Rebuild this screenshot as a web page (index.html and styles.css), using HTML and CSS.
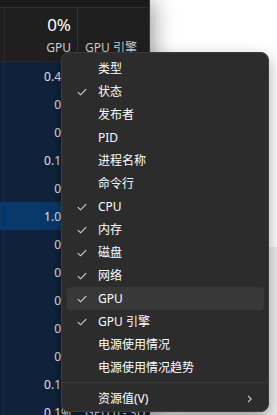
FILE: index.html
```html
<!DOCTYPE html>
<html lang="zh-CN">
<head>
<meta charset="utf-8">
<link rel="stylesheet" href="styles.css">
</head>
<body>
<div class="screen">
  <div class="app">
    <div class="topbar"></div>
    <div class="header">
      <div class="hcell edge"></div>
      <div class="hcell gpu">
        <div class="pct">0%</div>
        <div class="hname">GPU</div>
      </div>
      <div class="hcell eng">
        <div class="pct"></div>
        <div class="hname">GPU 引擎</div>
      </div>
    </div>
    <div class="rows">
      <div class="row"><span class="edge"></span><span class="val">0.4%</span><span class="eng"></span></div>
      <div class="row"><span class="edge"></span><span class="val">0%</span><span class="eng"></span></div>
      <div class="row"><span class="edge"></span><span class="val">0%</span><span class="eng"></span></div>
      <div class="row"><span class="edge"></span><span class="val">0.1%</span><span class="eng"></span></div>
      <div class="row"><span class="edge"></span><span class="val">0%</span><span class="eng"></span></div>
      <div class="row hot"><span class="edge"></span><span class="val">1.0%</span><span class="eng"></span></div>
      <div class="row"><span class="edge"></span><span class="val">0%</span><span class="eng"></span></div>
      <div class="row"><span class="edge"></span><span class="val">0%</span><span class="eng"></span></div>
      <div class="row"><span class="edge"></span><span class="val">0%</span><span class="eng"></span></div>
      <div class="row"><span class="edge"></span><span class="val">0%</span><span class="eng"></span></div>
      <div class="row"><span class="edge"></span><span class="val">0%</span><span class="eng"></span></div>
      <div class="row"><span class="edge"></span><span class="val">0.1%</span><span class="eng"></span></div>
      <div class="row"><span class="edge"></span><span class="val">0.1%</span><span class="eng">GPU 0 - 3D</span></div>
    </div>
  </div>
  <div class="desktop">
    <div class="white"></div>
    <div class="grey"></div>
  </div>

  <div class="menu">
    <div class="item"><span class="check"></span><span class="label">类型</span></div>
    <div class="item"><span class="check"><svg viewBox="0 0 10 8" width="10" height="8"><path d="M0.8 4.2 L3.6 6.8 L9.2 1.2" /></svg></span><span class="label">状态</span></div>
    <div class="item"><span class="check"></span><span class="label">发布者</span></div>
    <div class="item"><span class="check"></span><span class="label">PID</span></div>
    <div class="item"><span class="check"></span><span class="label">进程名称</span></div>
    <div class="item"><span class="check"></span><span class="label">命令行</span></div>
    <div class="item"><span class="check"><svg viewBox="0 0 10 8" width="10" height="8"><path d="M0.8 4.2 L3.6 6.8 L9.2 1.2" /></svg></span><span class="label">CPU</span></div>
    <div class="item"><span class="check"><svg viewBox="0 0 10 8" width="10" height="8"><path d="M0.8 4.2 L3.6 6.8 L9.2 1.2" /></svg></span><span class="label">内存</span></div>
    <div class="item"><span class="check"><svg viewBox="0 0 10 8" width="10" height="8"><path d="M0.8 4.2 L3.6 6.8 L9.2 1.2" /></svg></span><span class="label">磁盘</span></div>
    <div class="item"><span class="check"><svg viewBox="0 0 10 8" width="10" height="8"><path d="M0.8 4.2 L3.6 6.8 L9.2 1.2" /></svg></span><span class="label">网络</span></div>
    <div class="item hover"><span class="check"><svg viewBox="0 0 10 8" width="10" height="8"><path d="M0.8 4.2 L3.6 6.8 L9.2 1.2" /></svg></span><span class="label">GPU</span></div>
    <div class="item"><span class="check"><svg viewBox="0 0 10 8" width="10" height="8"><path d="M0.8 4.2 L3.6 6.8 L9.2 1.2" /></svg></span><span class="label">GPU 引擎</span></div>
    <div class="item"><span class="check"></span><span class="label">电源使用情况</span></div>
    <div class="item"><span class="check"></span><span class="label">电源使用情况趋势</span></div>
    <div class="sep"></div>
    <div class="item"><span class="check"></span><span class="label">资源值(V)</span><span class="chev"><svg viewBox="0 0 5 8" width="5" height="8"><path d="M1 0.8 L4.2 4 L1 7.2" /></svg></span></div>
  </div>
</div>
</body>
</html>
```

FILE: styles.css
```css
html, body {
  margin: 0;
  padding: 0;
}
body {
  width: 277px;
  height: 415px;
  overflow: hidden;
  background: #ffffff;
  font-family: "Noto Sans", "Noto Sans CJK SC", sans-serif;
}
.screen {
  position: relative;
  display: flex;
  width: 277px;
  height: 415px;
  overflow: hidden;
}
.app {
  position: relative;
  z-index: 1;
  width: 150px;
  flex: none;
  height: 415px;
  background: #1c1c1c;
  box-shadow: 2px 0 22px rgba(0, 0, 0, 0.45);
  border-right: 1px solid #3a3a3a;
  box-sizing: border-box;
  overflow: hidden;
}
.topbar {
  height: 7px;
  background: #1a1a1a;
  border-bottom: 1px solid #2e2e2e;
}
.header {
  display: flex;
  height: 53px;
  background: #1f1f1f;
  border-bottom: 1px solid #2a2a2a;
}
.hcell {
  display: flex;
  flex-direction: column;
}
.hcell.edge {
  width: 4px;
}
.hcell.gpu {
  width: 73px;
  border-left: 1px solid #2c2c2c;
  box-sizing: border-box;
  align-items: flex-end;
  padding-right: 6px;
}
.hcell.eng {
  flex: 1;
  border-left: 1px solid #333333;
  padding-left: 7px;
}
.pct {
  height: 32px;
  line-height: 34px;
  font-size: 17px;
  color: #ffffff;
}
.hname {
  line-height: 16px;
  font-size: 12px;
  color: #cfcfcf;
  white-space: nowrap;
}
.rows {
  display: flex;
  flex-direction: column;
}
.row {
  display: flex;
  height: 28px;
  align-items: center;
  background: #10223b;
  font-size: 12px;
  color: #e6e6e6;
}
.row.hot {
  background: #0b386a;
}
.row .edge {
  width: 4px;
  height: 28px;
  border-right: 1px solid #1a2c45;
  box-sizing: border-box;
}
.row .val {
  width: 73px;
  box-sizing: border-box;
  padding-right: 6px;
  text-align: right;
}
.row .eng {
  padding-left: 8px;
  white-space: nowrap;
}
.desktop {
  flex: 1;
  display: flex;
  flex-direction: column;
}
.white {
  height: 247px;
  background: #ffffff;
}
.grey {
  flex: 1;
  background: #eeeeee;
}
.menu {
  position: absolute;
  z-index: 2;
  left: 61px;
  top: 52px;
  width: 208px;
  height: 360px;
  box-sizing: border-box;
  background: #2c2c2c;
  border: 1px solid #3b3b3b;
  border-radius: 8px;
  box-shadow: 0 6px 16px rgba(0, 0, 0, 0.35);
  padding: 4px 4px 1px 5px;
  display: flex;
  flex-direction: column;
  font-family: "Noto Sans", "Noto Sans CJK SC", sans-serif;
}
.item {
  display: flex;
  align-items: center;
  height: 23px;
  flex: none;
  border-radius: 4px;
  font-size: 12px;
  color: #ffffff;
}
.item.hover {
  background: #383838;
}
.check {
  width: 31px;
  padding-left: 10px;
  box-sizing: border-box;
  display: flex;
  align-items: center;
  flex: none;
}
.check svg, .chev svg {
  display: block;
  fill: none;
  stroke: #d6d6d6;
  stroke-width: 1.1;
}
.label {
  flex: 1;
  white-space: nowrap;
  line-height: 16px;
}
.chev {
  width: 17px;
  flex: none;
  display: flex;
  align-items: center;
}
.sep {
  height: 1px;
  margin: 3px -4px 4px -5px;
  background: #3d3d3d;
  flex: none;
}
```
